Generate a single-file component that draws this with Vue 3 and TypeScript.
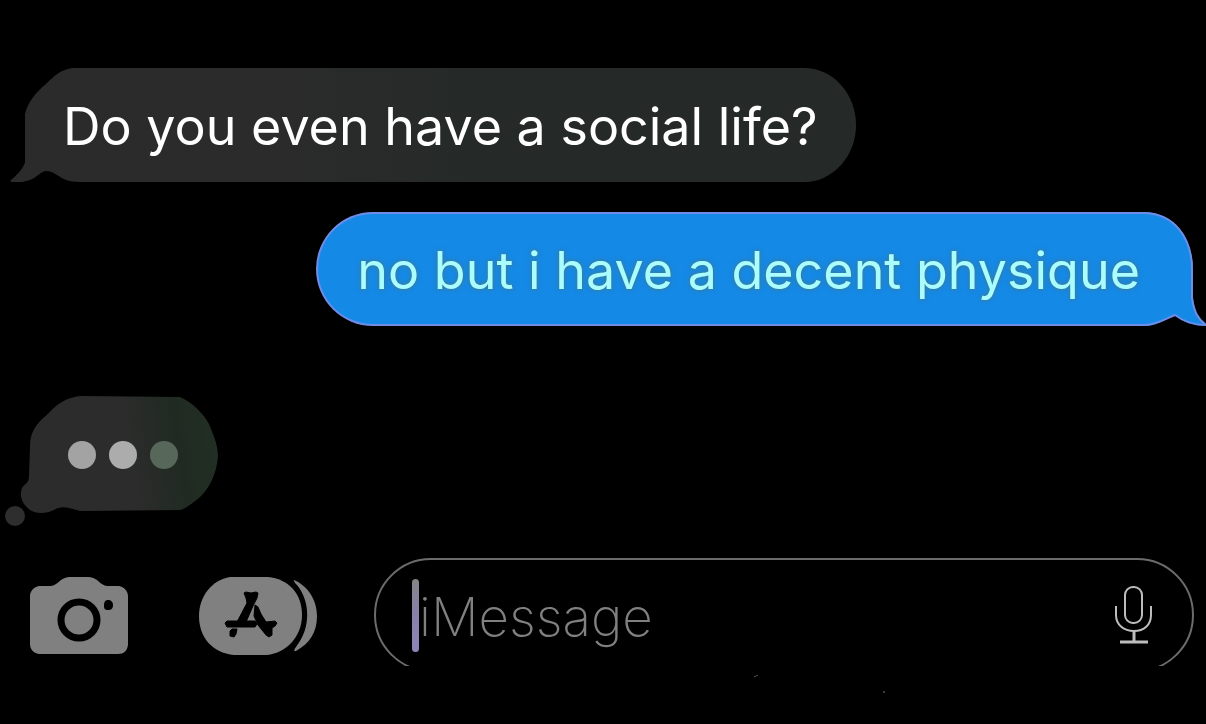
<script setup lang="ts">
import { ref } from 'vue'

const draft = ref('')
</script>

<template>
  <main class="chat">
    <section class="thread" aria-label="Conversation">
      <div class="bubble received">
        <svg class="cap" viewBox="0 0 76 114" aria-hidden="true">
          <path d="M76 0H62C50 2 44 8 36 16C26 24 18 34 15 46V94C14 100 6 108 0 113C4 116 14 114 20 112C26 110 30 104 36 103C44 103 48 109 56 112C62 114 68 114 76 114Z" />
        </svg>
        <p class="text">Do you even have a social life?</p>
      </div>

      <div class="bubble sent">
        <svg class="cap" viewBox="0 0 61 114" aria-hidden="true">
          <path class="fill" d="M0 0C28 1 48 24 48 58V86C49 100 54 108 61 114C48 114 38 110 30 103C22 106 12 114 0 114Z" />
          <path class="edge" d="M0 1C28 2 47 24 47 58V86C49 100 53 107 61 113C48 113 38 109 30 103C22 106 12 113 0 113" />
        </svg>
        <p class="text">no but i have a decent physique</p>
      </div>

      <svg class="typing" viewBox="0 0 220 140" role="img" aria-label="Typing">
        <defs>
          <linearGradient id="typing-fill" x1="0" x2="1" y1="0.1" y2="0">
            <stop offset="0.5" stop-color="#2c2c2c" />
            <stop offset="0.76" stop-color="#202a22" />
            <stop offset="1" stop-color="#223024" />
          </linearGradient>
        </defs>
        <path fill="url(#typing-fill)" d="M80 6L180 7C192 12 204 24 209 34C214 46 218 56 218 66C217 84 208 100 200 107C194 112 188 117 181 120L80 121C72 119 62 114 54 120C46 124 36 124 30 120C22 114 19 106 22 98C24 94 29 94 29 86L30 56C30 44 35 36 42 29C48 25 54 16 62 12C68 8 74 7 80 6Z" />
        <circle cx="15" cy="126" r="10" fill="#2e2e2e" />
        <circle cx="82" cy="65" r="14" fill="#a3a3a3" />
        <circle cx="123" cy="65" r="14" fill="#acacac" />
        <circle cx="164" cy="65" r="14" fill="#576759" />
      </svg>
    </section>

    <form class="composer" @submit.prevent>
      <button class="tool" type="button" aria-label="Camera">
        <svg width="100" height="80" viewBox="0 0 100 80" aria-hidden="true">
          <path fill="#808080" d="M10 11H22C28 11 32 2 40 2H60C68 2 72 11 78 11H90C95 12 99 16 99 21V70C98 76 95 79 89 79H10C4 78 1 74 1 69V21C1 16 5 12 10 11Z" />
          <circle cx="50" cy="45" r="18" fill="none" stroke="#000" stroke-width="7" />
          <path fill="#000" d="M79 25C82 25 84 27 84 30C84 34 82 35 79 35C76 35 75 34 75 31C75 27 76 25 79 25Z" />
        </svg>
      </button>
      <button class="tool" type="button" aria-label="Apps">
        <svg width="120" height="80" viewBox="0 0 120 80" aria-hidden="true">
          <path fill="#808080" d="M32 2H70C90 4 104 18 104 40C104 62 88 78 69 80H36C14 78 1 62 1 41C1 21 14 5 32 2Z" />
          <path fill="#808080" d="M96 5C110 11 119 25 119 41C119 57 112 68 98 76C94 77 98 72 100 69C112 53 113 27 99 10C97 8 95 5 96 5Z" />
          <g fill="#000" stroke="#000" stroke-linejoin="round">
            <path d="M46 18L48 17L53 18L58 17L60 18L59 23L55 31L48 47H39L49 28L48 23Z" />
            <path d="M27 48L29 46H57L59 49L57 52H29Z" />
            <path d="M57 30L60 32L63 39L68 47L77 46L79 48L77 51L74 53L74 60L71 62L68 60L60 50L56 41Z" />
            <path d="M32 56L34 54H39L38 59L36 62L32 61Z" />
          </g>
        </svg>
      </button>
      <div class="field">
        <span class="caret" aria-hidden="true"></span>
        <input v-model="draft" class="entry" type="text" placeholder="iMessage" aria-label="iMessage" />
        <button class="mic" type="button" aria-label="Dictate">
          <svg width="40" height="60" viewBox="0 0 40 60" fill="none" stroke="#bdbdbd" stroke-width="2" aria-hidden="true">
            <rect x="11" y="2" width="17" height="36" rx="8" />
            <path d="M2 21V30C2 40 10 46 20 46C30 46 37 40 37 30V21" />
            <path d="M20 46V57M6 57H34" stroke-width="3" />
          </svg>
        </button>
      </div>
    </form>

    <svg class="specks" width="132" height="20" viewBox="0 0 132 20" aria-hidden="true">
      <path d="M0 2L4 0" stroke="#555" />
      <path d="M129 17H131" stroke="#777" />
    </svg>
  </main>
</template>

<style>
body {
  margin: 0;
  background: #000;
}
</style>

<style scoped>
.chat {
  box-sizing: border-box;
  min-height: 100vh;
  padding-top: 68px;
  overflow: hidden;
  background: #000;
  font-family: Inter, "Liberation Sans", sans-serif;
}

.thread {
  display: flex;
  flex-direction: column;
}

.bubble {
  position: relative;
  height: 114px;
  box-sizing: border-box;
}

.text {
  position: relative;
  margin: 0;
  font-size: 52px;
  line-height: 118px;
  white-space: nowrap;
}

.cap {
  position: absolute;
  top: 0;
  height: 114px;
}

.received {
  align-self: flex-start;
  margin-left: 10px;
  padding: 0 38px 0 53px;
  color: #fff;
}

.received::before {
  content: "";
  position: absolute;
  inset: 0 0 0 75px;
  border-radius: 0 52px 52px 0 / 0 57px 57px 0;
  background: linear-gradient(90deg, #2b2b2b 25%, #252a28 50%);
}

.received .cap {
  left: 0;
  width: 76px;
  fill: #2b2b2b;
}

.sent {
  align-self: flex-end;
  margin: 30px 61px 0 0;
  padding: 0 5px 0 39px;
  border: 2px solid #6f8ce6;
  border-right: 0;
  border-radius: 57px 0 0 57px;
  background: #1589e6;
  color: #a9fdff;
}

.sent .text {
  line-height: 114px;
  text-shadow: 0 0 5px #3c7d98, 0 0 3px #3c7d98;
}

.sent .cap {
  top: -2px;
  left: 100%;
  width: 61px;
}

.fill {
  fill: #1589e6;
}

.edge {
  fill: none;
  stroke: #6f8ce6;
  stroke-width: 2;
}

.typing {
  width: 220px;
  height: 140px;
  margin-top: 64px;
}

.composer {
  display: flex;
  align-items: center;
  margin-top: 28px;
  padding: 0 12px 0 29px;
}

.tool,
.mic {
  display: flex;
  flex: none;
  padding: 0;
  border: 0;
  background: none;
}

.tool {
  margin-right: 69px;
}

.tool + .tool {
  margin-right: 56px;
}

.field {
  position: relative;
  display: flex;
  flex: 1;
  align-items: center;
  box-sizing: border-box;
  min-width: 0;
  height: 114px;
  padding: 0 40px 0 38px;
}

.field::before {
  content: "";
  position: absolute;
  inset: 0;
  border: 2px solid #6c6c6c;
  border-radius: 57px;
  clip-path: inset(0 0 6px 0);
  pointer-events: none;
}

.caret {
  flex: none;
  width: 7px;
  height: 73px;
  border-radius: 4px;
  background: linear-gradient(#858585, #8780ac 50%, #8f87b8);
}

.entry {
  flex: 1;
  width: 100%;
  min-width: 0;
  padding: 4px 0 0;
  border: 0;
  outline: 0;
  background: none;
  color: #ddd;
  font: 200 53px/64px Inter, "Liberation Sans", sans-serif;
}

.entry::placeholder {
  color: #808080;
  opacity: 1;
}

.specks {
  display: block;
  margin: 3px 0 0 754px;
}
</style>
